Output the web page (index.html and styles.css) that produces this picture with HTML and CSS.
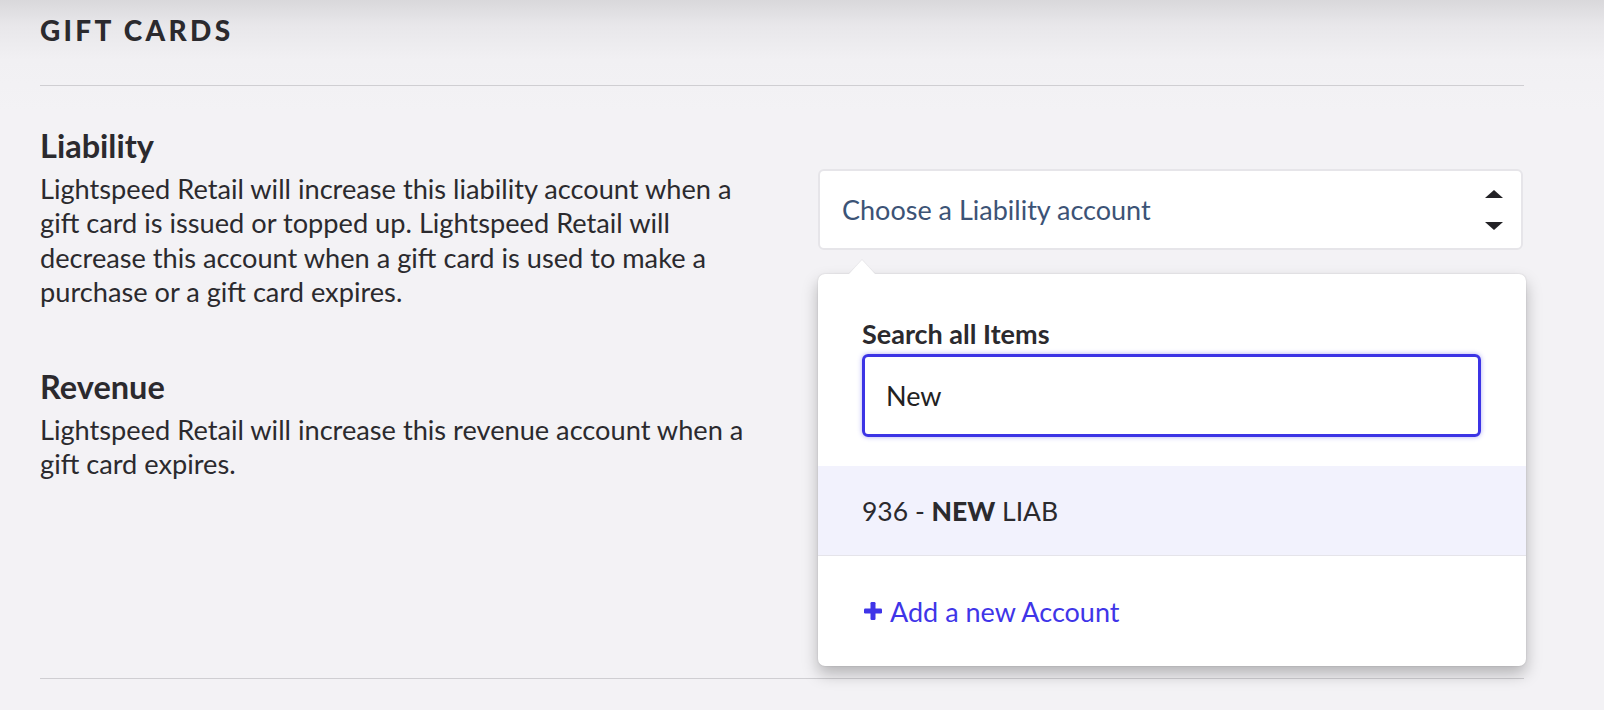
FILE: index.html
```html
<!DOCTYPE html>
<html>
<head>
<meta charset="utf-8">
<link rel="stylesheet" href="styles.css">
</head>
<body>
<div class="page">
  <h1 class="title">GIFT CARDS</h1>
  <div class="section">
    <div class="info">
      <div class="block">
        <h2 class="label">Liability</h2>
        <p class="desc">Lightspeed Retail will increase this liability account when a gift card is issued or topped up. Lightspeed Retail will decrease this account when a gift card is used to make a purchase or a gift card expires.</p>
      </div>
      <div class="block">
        <h2 class="label">Revenue</h2>
        <p class="desc">Lightspeed Retail will increase this revenue account when a gift card expires.</p>
      </div>
    </div>
    <div class="control">
      <div class="select">
        <span class="placeholder">Choose a Liability account</span>
        <span class="arrows">
          <svg width="18" height="40" viewBox="0 0 18 40"><path d="M0 8 L9 0 L18 8 Z" fill="#232226"/><path d="M0 32 L18 32 L9 40 Z" fill="#232226"/></svg>
        </span>
      </div>
      <div class="popover">
        <div class="search">
          <div class="search-label">Search all Items</div>
          <div class="search-input">New</div>
        </div>
        <div class="option">936 - <b>NEW</b> LIAB</div>
        <div class="add"><svg class="plus" width="18" height="18" viewBox="0 0 18 18"><rect x="6.5" y="0" width="5" height="18" rx="1.2" fill="#3f35e8"/><rect x="0" y="6.5" width="18" height="5" rx="1.2" fill="#3f35e8"/></svg>Add a new Account</div>
      </div>
    </div>
  </div>
</div>
</body>
</html>
```

FILE: styles.css
```css
html, body {
  margin: 0;
  padding: 0;
}
body {
  width: 1604px;
  height: 710px;
  overflow: hidden;
  background: linear-gradient(to bottom, #d9d8db 0px, #e8e7ea 25px, #f1f0f3 60px, #f3f2f5 110px, #f3f2f5 100%);
  font-family: Lato, "Noto Sans", sans-serif;
  color: #2b2a2e;
}
.page {
  width: 1484px;
  padding: 13px 0 0 40px;
}
.title {
  margin: 0;
  font-size: 28px;
  line-height: 34px;
  font-weight: 900;
  letter-spacing: 3.3px;
  color: #2b2a2e;
  padding-bottom: 38px;
  border-bottom: 1px solid #cfced2;
}
.section {
  display: flex;
  padding-top: 41px;
  border-bottom: 1px solid #cfced2;
  height: 593px;
  box-sizing: border-box;
}
.info {
  width: 778px;
  flex: none;
}
.block {
  margin-bottom: 58.5px;
}
.label {
  margin: 0 0 6.5px 0;
  font-size: 32.5px;
  line-height: 38px;
  font-weight: 700;
}
.desc {
  margin: 0;
  font-size: 27.2px;
  line-height: 34.6px;
  width: 718px;
  color: #2b2a2e;
}
.control {
  flex: 1;
  position: relative;
}
.select {
  box-sizing: border-box;
  width: 705px;
  height: 81px;
  margin-top: 42px;
  background: #fff;
  border: 2.5px solid #e6e5e9;
  border-radius: 6px;
  display: flex;
  align-items: center;
  justify-content: space-between;
  padding: 0 18px 0 22px;
}
.placeholder {
  font-size: 27px;
  color: #3c5376;
}
.arrows {
  display: flex;
}
.popover {
  position: absolute;
  left: 0;
  top: 147px;
  width: 708px;
  background: #fff;
  border-radius: 7px;
  box-shadow: 0 8px 16px rgba(0,0,0,0.26), 0 0 2px rgba(0,0,0,0.14);
}
.popover::before {
  content: "";
  position: absolute;
  top: -14px;
  left: 31px;
  border-left: 13px solid transparent;
  border-right: 13px solid transparent;
  border-bottom: 14px solid #fff;
  filter: drop-shadow(0 -1px 0 rgba(0,0,0,0.05));
}
.search {
  padding: 43px 45px 29px 44px;
}
.search-label {
  font-size: 27px;
  font-weight: 700;
  line-height: 34px;
  margin-bottom: 3px;
}
.search-input {
  box-sizing: border-box;
  height: 83px;
  border: 3px solid #3c34e5;
  border-radius: 6px;
  box-shadow: 0 0 5px rgba(60,52,229,0.4);
  padding: 0 21px;
  display: flex;
  align-items: center;
  font-size: 27px;
  color: #222;
}
.option {
  background: #f2f2fd;
  height: 90px;
  box-sizing: border-box;
  border-bottom: 1.5px solid #e5e4ea;
  display: flex;
  align-items: center;
  padding: 0 44px;
  font-size: 26.5px;
  color: #2b2a2e;
  white-space: pre;
}
.option b {
  font-weight: 900;
}
.add {
  height: 110px;
  display: flex;
  align-items: center;
  padding: 0 46px;
  font-size: 27px;
  color: #3f35e8;
  gap: 8px;
}
.plus {
  flex: none;
}
```
